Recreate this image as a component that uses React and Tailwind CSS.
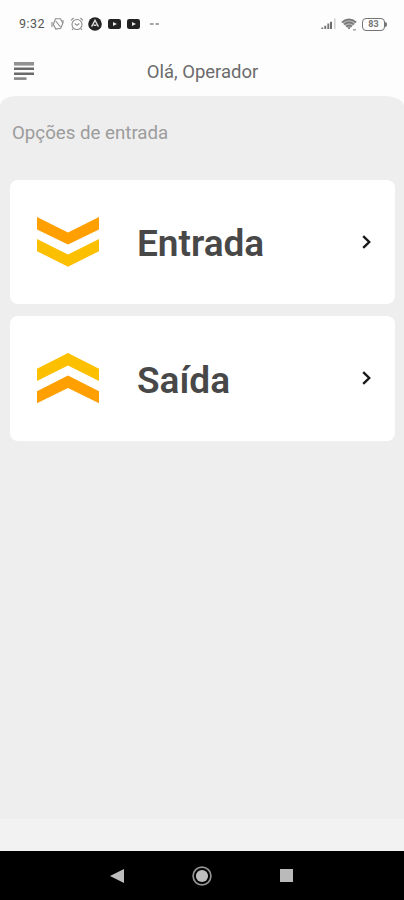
const options = [
  { label: "Entrada", icon: "down" },
  { label: "Saída", icon: "up" },
];

const App = () => {
  return (
    <div className="w-full h-[900px] flex flex-col bg-[#fdfdfd] font-[Roboto,sans-serif] overflow-hidden">
      <StatusBar />

      <header className="h-12 shrink-0 grid grid-cols-[1fr_auto_1fr] items-center pl-[14px] pr-[13px]">
        <button aria-label="Menu" className="w-5 h-5 mb-[2px]">
          <svg viewBox="0 0 20 20" className="w-5 h-5">
            <path d="M0 2.8h20" stroke="#929292" strokeWidth="3.6" />
            <path d="M0 7.8h20M0 12.8h20" stroke="#6a6a6a" strokeWidth="2.5" />
            <path d="M0 17.6h12.5" stroke="#858585" strokeWidth="2.6" />
          </svg>
        </button>
        <h1 className="text-[18.5px] leading-6 text-[#6b6b6b]">Olá, Operador</h1>
      </header>

      <main className="flex-1 bg-[#eee] rounded-tl-[16px_10px] rounded-tr-[20px_10px] pl-[10px] pr-[9.5px] flex flex-col">
        <p className="mt-[25px] ml-[2px] text-[18.7px] leading-6 text-[#9c9c9c]">Opções de entrada</p>
        <div className="mt-[34.5px] flex flex-col gap-3">
          {options.map((o) => (
            <OptionCard key={o.label} {...o} />
          ))}
        </div>
      </main>
      <div className="h-8 shrink-0 bg-[#f2f2f2]" />

      {/* Android navigation */}
      <nav className="h-[49px] shrink-0 bg-black flex items-center justify-between pl-[110px] pr-[111px]">
        <svg viewBox="0 0 14 14" className="w-[14px] h-[14px]">
          <path d="M14 0v14L0 7z" fill="#bdbdbd" />
        </svg>
        <svg viewBox="0 0 20 20" className="w-5 h-5">
          <circle cx="10" cy="10" r="8.9" fill="none" stroke="#929292" strokeWidth="1.7" />
          <circle cx="10" cy="10" r="6.1" fill="#bdbdbd" />
        </svg>
        <div className="w-[13px] h-[13px] bg-[#bababa]" />
      </nav>
    </div>
  );
};

const OptionCard = ({ label, icon }) => (
  <button className="h-[124.5px] w-full bg-white rounded-lg flex items-center pl-[27px] pr-[23px] text-left">
    {icon === "down" ? (
      <svg viewBox="0 0 62 50" className="w-[62px] h-[50px]">
        <path d="M0 0l31 15.5L62 0v12.5L31 27.5 0 12.5z" fill="#ff9f00" />
        <path d="M0 22l31 15.5L62 22v12.2L31 49.7 0 34.2z" fill="#fcc000" />
      </svg>
    ) : (
      <svg viewBox="0 0 62 50" className="w-[62px] h-[50px]">
        <path d="M0 15.8L31 0l31 15.8V28L31 12.6 0 28z" fill="#fcc000" />
        <path d="M0 38.2L31 22.5l31 15.7v12L31 35 0 50.2z" fill="#ff9f00" />
      </svg>
    )}
    <span className="ml-[38px] pt-[5px] flex-1 text-[37px] leading-[44px] font-semibold text-[#484848]">{label}</span>
    <svg viewBox="0 0 10 16" className="w-[10px] h-4" fill="none">
      <path d="M1.2 2.2L7.2 8l-6 5.8" stroke="#181818" strokeWidth="2.4" />
    </svg>
  </button>
);

const StatusBar = () => (
  <div className="h-12 shrink-0 flex items-center justify-between pl-[19px] pr-[17px] text-[#555]">
    <div className="flex items-center">
      <span className="w-[32px] text-[12.5px] leading-4 tracking-[0.5px]">9:32</span>
      {/* Vibration off */}
      <svg viewBox="0 0 13 14" className="w-[13px] h-[14px]" fill="none" stroke="#8c8c8c" strokeWidth="1.1">
        <path d="M4.5 1.8h5l2.3 4.5-2 5-5 .8-2.5-4.6z" />
        <path d="M4.7 4l4.8 6M1 5v5M12 3v3" />
      </svg>
      {/* Alarm */}
      <svg viewBox="0 0 14 14" className="ml-[6px] w-[14px] h-[14px]" fill="none" stroke="#8c8c8c" strokeWidth="1.1">
        <circle cx="7" cy="7.5" r="5" />
        <path d="M1 3.4L3.6 1M13 3.4L10.4 1M4.7 6.5L7 8.4l2.3-1.9M3.2 11.6L2 13M10.8 11.6L12 13" />
      </svg>
      <svg viewBox="0 0 14 14" className="ml-[4px] w-[14px] h-[14px]">
        <circle cx="7" cy="7" r="6.8" fill="#222" />
        <path d="M3.6 9.7L7 3.3l3.4 6.4M5.6 8.2h2.8" fill="none" stroke="#d5d5d5" strokeWidth="1.4" />
      </svg>
      <VideoBadge />
      <VideoBadge />
      <svg viewBox="0 0 9 2" className="ml-[10px] w-[9px] h-[2px]">
        <path d="M0 1h3.5M5.5 1H9" stroke="#888" strokeWidth="1.4" />
      </svg>
    </div>

    <div className="flex items-center">
      {/* Signal */}
      <svg viewBox="0 0 15 12" className="w-[15px] h-3" fill="none" strokeWidth="1.9">
        <path d="M1.3 11V9.5M4.3 11V7.8M7.3 11V5.5" stroke="#777" />
        <path d="M10 11V3.8" stroke="#666" />
        <path d="M13.8 11V.5" stroke="#ccc" strokeWidth="1.4" />
      </svg>
      {/* Wi-Fi */}
      <svg viewBox="0 0 16 13" className="ml-[5px] w-4 h-[13px]" fill="none" stroke="#777" strokeWidth="1.6">
        <path d="M.8 4.3Q8-1.7 15.2 4.3L8 11.3z" fill="#b5b5b5" stroke="none" />
        <path d="M.8 4.3Q8-1.7 15.2 4.3M3 6.5Q8 2.4 13 6.5M5.2 8.7Q8 6.3 10.8 8.7" />
        <path d="M7 9.8h2L8 11z" fill="#777" strokeWidth=".6" />
        <path d="M12 11.8h3" stroke="#aaa" />
      </svg>
      {/* Battery */}
      <div className="ml-[5px] w-[23px] h-[13px] rounded-[4px] border-[1.5px] border-[#747474] flex items-center justify-center text-[9px] leading-none font-bold text-[#777]">
        83
      </div>
      <div className="w-[2px] h-[5px] rounded-r-sm bg-[#777]" />
    </div>
  </div>
);

const VideoBadge = () => (
  <svg viewBox="0 0 13 10" className="ml-[6px] w-[13px] h-[10px]">
    <rect width="13" height="10" rx="2.2" fill="#222" />
    <path d="M5 2.9v4.2L9 5z" fill="#e8e8e8" />
  </svg>
);

export default App;
